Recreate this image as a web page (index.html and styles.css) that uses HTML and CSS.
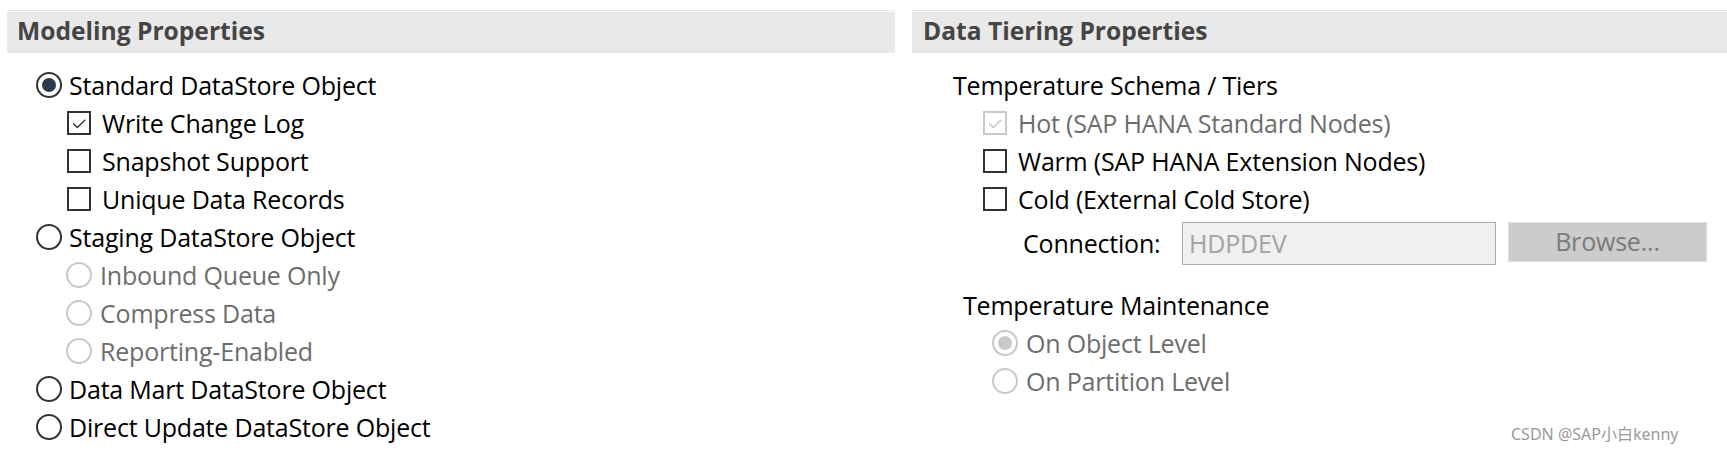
FILE: index.html
```html
<!DOCTYPE html>
<html>
<head>
<meta charset="utf-8">
<link rel="stylesheet" href="styles.css">
</head>
<body>
<div class="page">
  <section class="panel left">
    <div class="topline"></div>
    <div class="bar">Modeling Properties</div>
    <div class="list">
      <div class="row l1"><span class="radio on"></span><span class="lbl">Standard DataStore Object</span></div>
      <div class="row l2c"><span class="check on"><svg viewBox="0 0 24 24"><path d="M5 12.5 L10 17.5 L19.5 8"/></svg></span><span class="lbl">Write Change Log</span></div>
      <div class="row l2c"><span class="check"></span><span class="lbl">Snapshot Support</span></div>
      <div class="row l2c"><span class="check"></span><span class="lbl">Unique Data Records</span></div>
      <div class="row l1"><span class="radio"></span><span class="lbl">Staging DataStore Object</span></div>
      <div class="row l2r dis"><span class="radio"></span><span class="lbl">Inbound Queue Only</span></div>
      <div class="row l2r dis"><span class="radio"></span><span class="lbl">Compress Data</span></div>
      <div class="row l2r dis"><span class="radio"></span><span class="lbl">Reporting-Enabled</span></div>
      <div class="row l1"><span class="radio"></span><span class="lbl">Data Mart DataStore Object</span></div>
      <div class="row l1"><span class="radio"></span><span class="lbl">Direct Update DataStore Object</span></div>
    </div>
  </section>
  <section class="panel right">
    <div class="topline"></div>
    <div class="bar">Data Tiering Properties</div>
    <div class="list">
      <div class="row t1"><span class="lbl">Temperature Schema / Tiers</span></div>
      <div class="row t2 dis"><span class="check on"><svg viewBox="0 0 24 24"><path d="M5 12.5 L10 17.5 L19.5 8"/></svg></span><span class="lbl">Hot (SAP HANA Standard Nodes)</span></div>
      <div class="row t2"><span class="check"></span><span class="lbl">Warm (SAP HANA Extension Nodes)</span></div>
      <div class="row t2"><span class="check"></span><span class="lbl">Cold (External Cold Store)</span></div>
      <div class="conn">
        <span class="connlbl">Connection:</span>
        <div class="input">HDPDEV</div>
        <div class="btn">Browse...</div>
      </div>
      <div class="row t1b"><span class="lbl">Temperature Maintenance</span></div>
      <div class="row t2r dis"><span class="radio on"></span><span class="lbl">On Object Level</span></div>
      <div class="row t2r dis"><span class="radio"></span><span class="lbl">On Partition Level</span></div>
    </div>
  </section>
</div>
<div class="wm">CSDN @SAP小白kenny</div>
</body>
</html>
```
FILE: styles.css
```css
html, body {
  margin: 0;
  padding: 0;
  background: #ffffff;
}
body {
  width: 1727px;
  height: 454px;
  overflow: hidden;
  position: relative;
  font-family: "Open Sans", "Noto Sans", "Noto Sans CJK SC", sans-serif;
  color: #000;
}
.page {
  display: flex;
  gap: 17px;
  padding-left: 7px;
  padding-top: 10px;
}
.panel.left { width: 888px; }
.panel.right { flex: 1; }
.topline {
  height: 1px;
  background: #e6e6e6;
  margin-bottom: 1px;
}
.bar {
  height: 41px;
  background: #e9e9e9;
  color: #454545;
  font-weight: 700;
  font-size: 24.6px;
  line-height: 37px;
  padding-left: 10px;
}
.right .bar { padding-left: 11px; }
.list {
  display: flex;
  flex-direction: column;
  padding-top: 13px;
}
.row {
  height: 38px;
  display: flex;
  align-items: center;
  font-size: 25px;
  white-space: nowrap;
}
.lbl { letter-spacing: -0.2px; }
.dis .lbl { color: #6d6d6d; }
.radio {
  width: 26px;
  height: 26px;
  box-sizing: border-box;
  border: 2px solid #333;
  border-radius: 50%;
  display: inline-flex;
  align-items: center;
  justify-content: center;
  flex: none;
}
.radio.on::after {
  content: "";
  width: 14px;
  height: 14px;
  border-radius: 50%;
  background: #2b3a4a;
}
.dis .radio { border-color: #c9c9c9; }
.dis .radio.on::after { background: #c9c9c9; }
.check {
  width: 24px;
  height: 24px;
  box-sizing: border-box;
  border: 2px solid #333;
  flex: none;
  display: inline-flex;
}
.check svg { width: 20px; height: 20px; }
.check svg path {
  fill: none;
  stroke: #333;
  stroke-width: 1.6;
}
.dis .check { border-color: #c9c9c9; }
.dis .check svg path { stroke: #c4c4c4; }

.l1 { padding-left: 29px; }
.l1 .radio { margin-right: 7px; }
.l2c { padding-left: 60px; }
.l2c .check { margin-right: 11px; }
.l2r { padding-left: 59px; }
.l2r .radio { margin-right: 8px; }

.t1 { padding-left: 41px; }
.t2 { padding-left: 71px; }
.t2 .check { margin-right: 11px; }
.conn {
  display: flex;
  align-items: center;
  height: 44px;
  margin-top: 3px;
  padding-left: 111px;
  font-size: 25px;
}
.connlbl { width: 159px; letter-spacing: -0.2px; }
.input {
  width: 314px;
  height: 43px;
  box-sizing: border-box;
  border: 1px solid #adadad;
  background: #f0f0f0;
  color: #a3a3a3;
  padding-left: 6px;
  line-height: 40px;
  letter-spacing: -0.2px;
}
.btn {
  margin-left: 12px;
  margin-bottom: 2px;
  width: 199px;
  height: 40px;
  box-sizing: border-box;
  border: 1px solid #dedede;
  background: #cccccc;
  color: #7b7b7b;
  text-align: center;
  line-height: 37px;
  letter-spacing: -0.2px;
}
.t1b { padding-left: 51px; margin-top: 21px; }
.t2r { padding-left: 80px; }
.t2r .radio { margin-right: 8px; }

.wm {
  position: absolute;
  left: 1511px;
  top: 421px;
  font-size: 16px;
  color: #9a9a9a;
  text-shadow: 0 0 1px #fff;
  font-family: "Noto Sans", "Noto Sans CJK SC", sans-serif;
}
```
